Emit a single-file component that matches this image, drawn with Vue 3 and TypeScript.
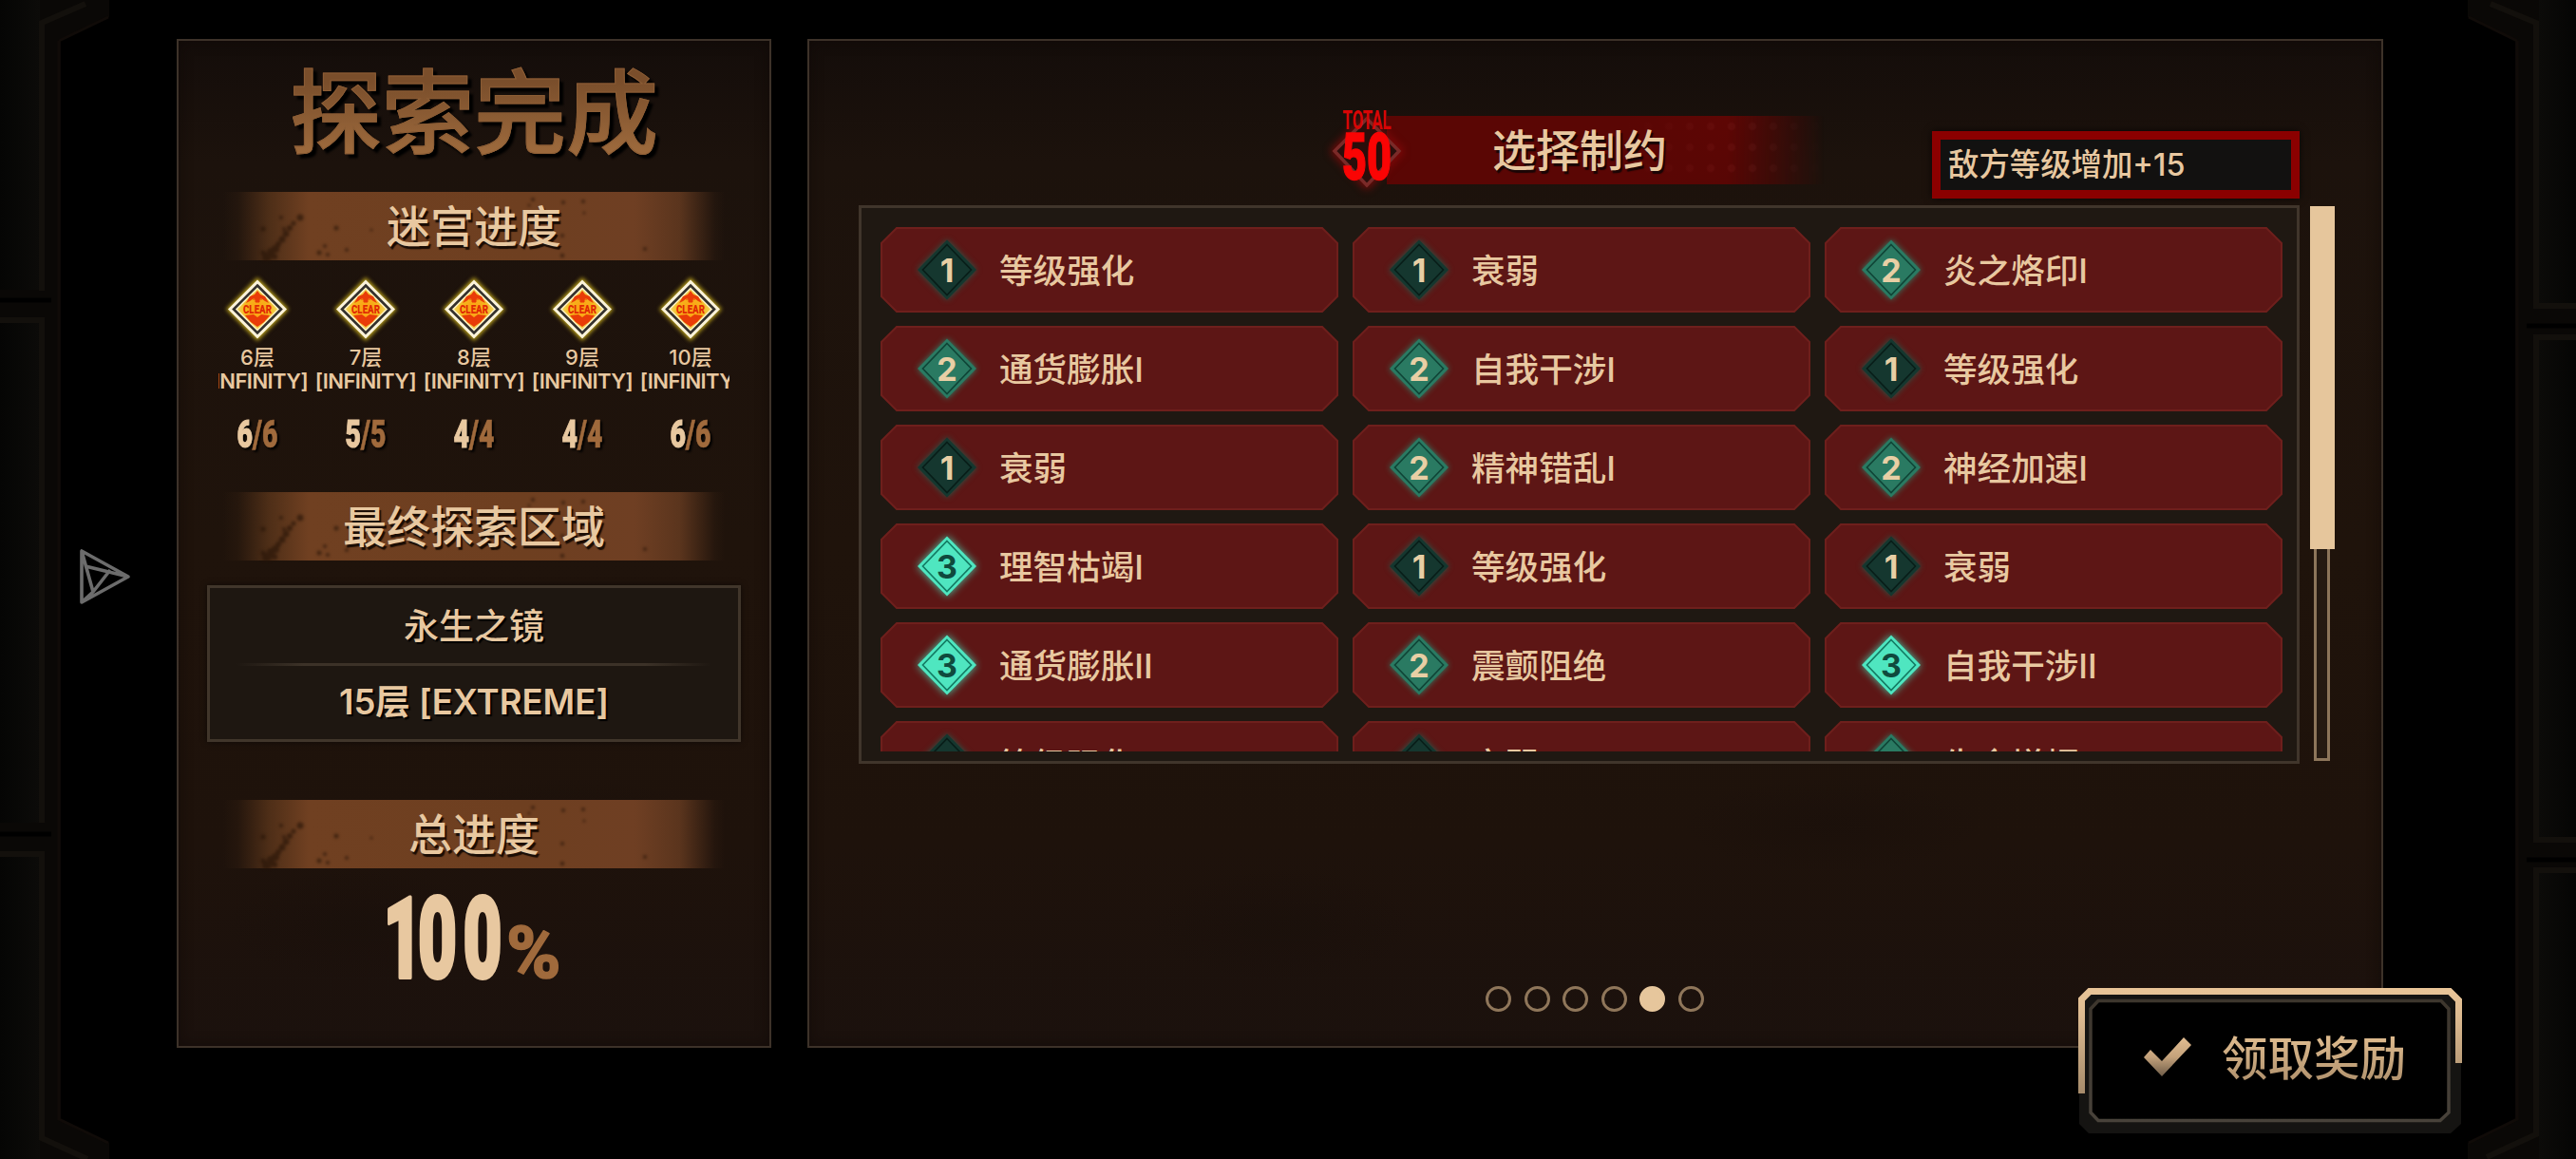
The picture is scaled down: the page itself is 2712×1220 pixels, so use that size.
<script setup lang="ts">
interface Floor {
  floor: string
  done: string
  total: string
}
interface Constraint {
  level: 1 | 2 | 3
  name: string
}

const floors: Floor[] = [
  { floor: '6层', done: '6', total: '/6' },
  { floor: '7层', done: '5', total: '/5' },
  { floor: '8层', done: '4', total: '/4' },
  { floor: '9层', done: '4', total: '/4' },
  { floor: '10层', done: '6', total: '/6' },
]

const constraints: Constraint[] = [
  { level: 1, name: '等级强化' },
  { level: 1, name: '衰弱' },
  { level: 2, name: '炎之烙印I' },
  { level: 2, name: '通货膨胀I' },
  { level: 2, name: '自我干涉I' },
  { level: 1, name: '等级强化' },
  { level: 1, name: '衰弱' },
  { level: 2, name: '精神错乱I' },
  { level: 2, name: '神经加速I' },
  { level: 3, name: '理智枯竭I' },
  { level: 1, name: '等级强化' },
  { level: 1, name: '衰弱' },
  { level: 3, name: '通货膨胀II' },
  { level: 2, name: '震颤阻绝' },
  { level: 3, name: '自我干涉II' },
  { level: 1, name: '等级强化' },
  { level: 1, name: '衰弱' },
  { level: 2, name: '生命增幅' },
]

const pages = 6
const currentPage = 5
const specks: number[][] = [
  [77, 27, 3.5], [70, 33, 2.5], [66, 38, 3], [62, 44, 3.5], [58, 50, 3.5], [54, 55, 3], [51, 60, 4],
  [46, 63, 4], [42, 69, 5], [50, 68, 3], [60, 39, 2], [38, 64, 2.5], [57, 27, 2], [38, 39, 2.5],
  [115, 38, 2.5], [103, 57, 2], [97, 64, 2.5], [106, 66, 2], [126, 61, 2], [152, 40, 1.5],
  [322, 8, 2], [318, 14, 1.5], [354, 11, 2], [375, 10, 2], [376, 22, 1.5], [353, 46, 2], [353, 67, 2.2], [440, 60, 2],
]
</script>

<template>
  <div class="stage">
    <svg class="frame" viewBox="0 0 2712 1220" width="2712" height="1220" aria-hidden="true">
      <defs>
        <linearGradient id="stoneL"><stop offset="0" stop-color="#050504" /><stop offset="1" stop-color="#0c0b09" /></linearGradient>
        <linearGradient id="stoneR"><stop offset="0" stop-color="#0c0b09" /><stop offset="1" stop-color="#050504" /></linearGradient>
      </defs>
      <path d="M0 0H115V18L64 42V1178L115 1203V1220H0Z" fill="#0a0806" />
      <path d="M0 0H42V305H0ZM0 338H42V866H0ZM0 899H42V1220H0Z" fill="url(#stoneL)" />
      <path d="M90 4 44 24V306M0 337H44V866M0 899H44V1198L92 1220" fill="none" stroke="#13100c" stroke-width="6" />
      <path d="M0 316H54M0 878H54" stroke="#000" stroke-width="5" />
      <path d="M62 43V1178L114 1203M62 43 114 18" fill="none" stroke="#100b08" stroke-width="3" />
      <path d="M2712 0H2598V18L2648 42V1178L2598 1203V1220H2712Z" fill="#0a0806" />
      <path d="M2673 0H2712V320H2673ZM2673 355H2712V882H2673ZM2673 916H2712V1220H2673Z" fill="url(#stoneR)" />
      <path d="M2622 4 2670 24V322H2712M2712 355H2670V884H2712M2712 916H2670V1194L2618 1218" fill="none" stroke="#13100c" stroke-width="6" />
      <path d="M2660 343H2712M2660 905H2712" stroke="#000" stroke-width="5" />
      <path d="M2650 43V1178L2599 1203M2650 43 2599 18" fill="none" stroke="#100b08" stroke-width="3" />
    </svg>

    <svg class="cursor" viewBox="0 0 60 68" width="60" height="68">
      <path d="M6 7V61L55 34ZM6 7 18 50M10 23 55 34M36 27 18 50 6 61" fill="none" stroke="#6c6c6c" stroke-width="3.6" stroke-linejoin="round" />
    </svg>

    <main class="panels">
      <section class="panel summary">
        <h1>探索完成</h1>

        <div class="banner first">
          <svg viewBox="0 0 520 73" width="520" height="73"><circle v-for="(s, i) in specks" :key="i" :cx="s[0]" :cy="s[1]" :r="s[2]" /></svg>
          <span>迷宫进度</span>
        </div>

        <div class="floors">
          <div v-for="f in floors" :key="f.floor" class="floor">
            <svg class="clear" viewBox="0 0 76 76" width="76" height="76">
              <defs>
                <radialGradient id="gold"><stop offset="0" stop-color="#ff9b10" /><stop offset=".6" stop-color="#f5b41c" /><stop offset="1" stop-color="#f3d75a" /></radialGradient>
              </defs>
              <path class="glow" d="M38 4 71 37.500 38 71 5 37.500Z" />
              <path d="M38 6.500 69 37.500 38 68.500 7 37.500Z" fill="#fbf3da" />
              <path d="M38 12.500 63 37.500 38 62.500 13 37.500Z" fill="#fff2c4" stroke="#33302c" stroke-width="2.6" />
              <path d="M38 16.500 59 37.500 38 58.500 17 37.500Z" fill="url(#gold)" />
              <path d="M26 31 30 24 35 22 38 18 41 22 46 24 50 31 46 29 42 26 38 28 34 26 30 29ZM25 44 34 43 38 46 42 43 51 44 45 51 38 56 31 51Z" fill="#e93c08" />
              <path d="M36 24H40V30H36ZM33 27H43" fill="#e93c08" stroke="#e93c08" />
              <text x="23" y="41.500" textLength="30" lengthAdjust="spacingAndGlyphs">CLEAR</text>
            </svg>
            <div class="name">{{ f.floor }}</div>
            <div class="mode">[INFINITY]</div>
            <svg class="count" viewBox="0 0 50 44" width="50" height="44">
              <text x="3.5" y="35" textLength="43" lengthAdjust="spacingAndGlyphs">{{ f.done }}<tspan class="of">{{ f.total }}</tspan></text>
            </svg>
          </div>
        </div>

        <div class="banner second">
          <svg viewBox="0 0 520 73" width="520" height="73"><circle v-for="(s, i) in specks" :key="i" :cx="s[0]" :cy="s[1]" :r="s[2]" /></svg>
          <span>最终探索区域</span>
        </div>

        <div class="area">
          <div class="area-name">永生之镜</div>
          <hr />
          <div class="stage-name">15层 [EXTREME]</div>
        </div>

        <div class="banner third">
          <svg viewBox="0 0 520 73" width="520" height="73"><circle v-for="(s, i) in specks" :key="i" :cx="s[0]" :cy="s[1]" :r="s[2]" /></svg>
          <span>总进度</span>
        </div>

        <svg class="percent" viewBox="0 0 190 110" width="190" height="110">
          <g transform="scale(.6 1)">
            <text class="big" x="-1 60 139" y="98">100</text>
            <text class="pct" x="215" y="98" textLength="96" lengthAdjust="spacingAndGlyphs">%</text>
          </g>
        </svg>
      </section>

      <section class="panel detail">
        <header>
          <div class="select">
            <svg class="total" viewBox="0 0 90 100" width="90" height="100">
              <path class="halo" d="M45 18 79 52 45 88 11 52Z" />
              <path class="rhomb" d="M45 18 79 52 45 88 11 52Z" />
              <text class="word" x="19.5" y="29" textLength="51" lengthAdjust="spacingAndGlyphs">TOTAL</text>
              <text class="num" x="19" y="81.500" textLength="52" lengthAdjust="spacingAndGlyphs">50</text>
            </svg>
            <span>选择制约</span>
          </div>
          <div class="effect">敌方等级增加+15</div>
        </header>

        <div class="body">
          <div class="list">
            <div class="grid">
              <div v-for="(c, i) in constraints" :key="i" class="card">
                <svg class="plate" viewBox="0 0 482 90" width="482" height="90">
                  <path d="M17 1H465L481 17V73L465 89H17L1 73V17Z" fill="#5d1615" stroke="#6e1f1c" stroke-width="2" />
                </svg>
                <svg class="badge" :class="'lv' + c.level" viewBox="0 0 76 76" width="76" height="76">
                  <path class="outer" d="M38 6.500 69 38 38 69.500 7 38Z" />
                  <path class="inner" d="M38 11.500 63.500 38 38 64.500 12.500 38Z" />
                  <text x="38" y="50.5" text-anchor="middle">{{ c.level }}</text>
                </svg>
                <span>{{ c.name }}</span>
              </div>
            </div>
          </div>
          <div class="scrollbar"><i></i></div>
        </div>

        <nav class="dots">
          <i v-for="p in pages" :key="p" :class="{ on: p === currentPage }"></i>
        </nav>
      </section>
    </main>

    <button class="claim" type="button">
      <svg class="edge" viewBox="0 0 404 154" width="404" height="154">
        <defs>
          <linearGradient id="rim" x1="0" y1="0" x2="0" y2="1"><stop offset="0" stop-color="#e8c497" /><stop offset=".25" stop-color="#dcba90" /><stop offset="1" stop-color="#a68b6b" /></linearGradient>
          <linearGradient id="inr" x1="0" y1="0" x2="0" y2="1"><stop offset="0" stop-color="#3d362d" /><stop offset="1" stop-color="#48423a" /></linearGradient>
        </defs>
        <path d="M11 1H392L403 12V143L392 153H11L1 143V12Z" fill="#151412" />
        <path d="M21 13.500H382L390 22V131L381 139.500H21L13 131V22Z" fill="#000" stroke="url(#inr)" stroke-width="3.500" />
        <path d="M3.500 111V12L12 3.500H391L400.500 13V79" fill="none" stroke="url(#rim)" stroke-width="7" />
      </svg>
      <svg class="check" viewBox="0 0 54 42" width="54" height="42">
        <defs><linearGradient id="tick" x1="0" y1="0" x2="0" y2="1"><stop offset="0" stop-color="#e2bd91" /><stop offset=".5" stop-color="#c4a27b" /><stop offset="1" stop-color="#6f5d49" /></linearGradient></defs>
        <path d="M1 21 8 13 20 25 43 0 51 8 20 41Z" fill="url(#tick)" />
      </svg>
      <span>领取奖励</span>
    </button>
  </div>
</template>

<style>
body { margin: 0; background: #000; }
</style>

<style scoped>
.stage {
  position: relative;
  width: 2712px;
  height: 1220px;
  overflow: hidden;
  box-sizing: border-box;
  padding: 41px 0 0 186px;
  background: #000;
  color: #e8c8a0;
  font-family: Inter, "Noto Sans CJK SC", sans-serif;
  font-weight: 500;
}
.frame { position: absolute; left: 0; top: 0; }
.cursor { position: absolute; left: 80px; top: 573px; }
.panels { position: relative; display: flex; gap: 38px; }
.panel {
  box-sizing: border-box;
  height: 1062px;
  border: 2px solid #3d3229;
  display: flex;
  flex-direction: column;
  background:
    radial-gradient(ellipse 140px 60px at 30% 88%, #170e0a66, transparent),
    radial-gradient(ellipse 160px 50px at 65% 78%, #170e0a66, transparent),
    linear-gradient(#140d0a 0, #1c120c 12%, #1f130b 50%, #1e120b 80%, #1b110d 100%);
  box-shadow: inset 0 0 14px #0d080588;
}
.summary { width: 626px; align-items: center; }
.detail { width: 1659px; padding: 0 86px 0 52px; }
h1 {
  margin: 20px 0 0;
  font-size: 97px;
  line-height: 112px;
  font-weight: 500;
  background: linear-gradient(#7a4e2b 20%, #9c693c 85%);
  -webkit-background-clip: text;
  background-clip: text;
  color: transparent;
  -webkit-text-stroke: 1px #8c5d35;
  filter: drop-shadow(4px 4px 1px #000);
}
.banner {
  position: relative;
  width: 520px;
  height: 72px;
  flex: none;
  display: flex;
  justify-content: center;
  font-size: 46px;
  line-height: 73px;
  text-shadow: 2px 3px 1px #1a0d05;
}
.banner::before {
  content: "";
  position: absolute;
  inset: 0 -4px;
  background: linear-gradient(90deg, transparent 0, #6d401f18 3%, #6d401f99 9%, #704021 17%, #6e3f20 60%, #6f3f23 82%, #643a20dd 91%, #643a2018 98%, transparent);
}
.banner svg { position: absolute; left: 0; top: 0; fill: #241206; opacity: .6; filter: blur(1.6px); }
.banner span { position: relative; }
.first { margin-top: 27px; }
.floors { width: 538px; flex: none; display: flex; justify-content: center; overflow: hidden; margin-top: 14px; }
.floor { width: 114px; flex: none; display: flex; flex-direction: column; align-items: center; white-space: nowrap; line-height: 25px; }
.clear .glow { fill: #b8a01c; filter: blur(2px); }
.clear text { font: 900 13px Roboto, sans-serif; fill: #e02a04; stroke: #ffb81a; stroke-width: .5; paint-order: stroke; }
.name { margin-top: 0; font-size: 22px; }
.mode { font-size: 22px; letter-spacing: -.55px; font-weight: 600; }
.count { margin-top: 22px; filter: drop-shadow(2px 2px 1px #000); }
.count text { font: 900 41px Roboto, sans-serif; fill: #e8c8a0; stroke: #e8c8a0; stroke-width: 1; }
.count .of { fill: #a06a3c; stroke: #a06a3c; stroke-width: .6; }
.second { margin-top: 38px; }
.area {
  box-sizing: border-box;
  width: 562px;
  height: 165px;
  flex: none;
  margin-top: 26px;
  border: 3px solid #41362b;
  background: #1e1711;
  box-shadow: 0 0 6px #0008;
  text-align: center;
  font-size: 37px;
  text-shadow: 2px 2px 1px #000;
}
.area .area-name { line-height: 82px; height: 79px; }
.area hr { width: 500px; height: 3px; margin: 0 auto; border: 0; background: linear-gradient(90deg, transparent, #3c3228 14%, #3c3228 86%, transparent); }
.area .stage-name { font-weight: 600; font-size: 36.500px; line-height: 76px; }
.third { margin-top: 61px; }
.percent { margin-top: 17px; flex: none; }
.percent text { font: 900 118px Roboto, sans-serif; fill: #e8c8a0; stroke: #e8c8a0; stroke-width: 4; stroke-linejoin: round; }
.percent .pct { font-size: 76px; font-weight: 800; fill: #a06a3c; stroke: #a06a3c; stroke-width: 1.5; }

header { display: flex; justify-content: space-between; align-items: flex-start; height: 173px; box-sizing: border-box; padding: 79px 0 0 556px; }
.select { position: relative; width: 460px; height: 72px; }
.select::before {
  content: "";
  position: absolute;
  inset: 0;
  background:
    linear-gradient(90deg, #5a0604 55%, transparent 85%),
    radial-gradient(circle, #7a1a1a66 3px, transparent 5px) 0 0 / 22px 22px,
    linear-gradient(#5f0604, #570604);
  -webkit-mask-image: linear-gradient(90deg, #000 0, #000 78%, #0007 90%, transparent 100%);
}
.select span { position: relative; display: block; padding-left: 111px; font-size: 46px; line-height: 73px; text-shadow: 2px 3px 1px #1a0505; }
.total { position: absolute; left: -66px; top: -15px; overflow: visible; }
.total .halo { fill: #3a0806; stroke: #a0080a; stroke-width: 5; filter: blur(5px); }
.total .rhomb { fill: #2a0e0b; stroke: #7a2a28; stroke-width: 3.5; }
.total text { fill: #fa0404; font-family: Roboto, sans-serif; }
.total .word { font-size: 27px; font-weight: 700; fill: #d80505; }
.total .num { font-size: 69px; font-weight: 900; stroke: #fa0404; stroke-width: 1.5; }
.effect {
  box-sizing: border-box;
  width: 387px;
  height: 71px;
  margin-top: 16px;
  border: 9px solid #8b0000;
  background: #121110;
  box-shadow: 0 0 8px #000a;
  padding-left: 8px;
  font-size: 32.400px;
  line-height: 53px;
  white-space: nowrap;
}
.body { display: flex; gap: 11px; margin-right: -40px; }
.list {
  box-sizing: border-box;
  width: 1517px;
  flex: none;
  height: 588px;
  border: 3px solid #40352b;
  background: #1f1812;
  padding: 20px 0 0 20px;
}
.grid { display: grid; grid-template-columns: repeat(3, 482px); grid-auto-rows: 90px; gap: 14px 15px; height: 552px; overflow: hidden; }
.card { position: relative; display: flex; align-items: center; font-size: 35.600px; white-space: nowrap; padding-left: 32px; }
.card .plate { position: absolute; left: 0; top: 0; }
.card .badge, .card span { position: relative; }
.card span { padding-bottom: 4px; }
.card .badge { margin-right: 17px; flex: none; }
.badge text { font: 700 34px Inter, sans-serif; fill: #e8cfa5; }
.badge .inner { fill: none; stroke-width: 1.6; }
.lv1 .outer { fill: #15372f; filter: drop-shadow(0 0 3px #245a4c); }
.lv1 .inner { stroke: #081d18; }
.lv2 .outer { fill: #2a7a62; filter: drop-shadow(0 0 3px #2f8068); }
.lv2 .inner { stroke: #0f4436; }
.lv3 .outer { fill: #4fe6c0; filter: drop-shadow(0 0 4px #43c9a8); }
.lv3 .inner { stroke: #137a62; }
.lv3 text { fill: #0f4a3d; }
.scrollbar { position: relative; width: 26px; height: 587px; }
.scrollbar::before { content: ""; position: absolute; left: 4px; top: 2px; bottom: 2px; width: 17px; box-sizing: border-box; border: 3px solid #8c755a; background: #251a12; }
.scrollbar i { position: absolute; left: 0; top: 1px; width: 26px; height: 361px; background: #e6c69c; }
.dots { display: flex; gap: 13.600px; margin: 234px 0 0 660px; }
.dots i { box-sizing: border-box; width: 27px; height: 27px; border: 3px solid #8f765a; border-radius: 50%; }
.dots .on { background: #e6c69c; border-color: #e6c69c; }
.claim {
  position: absolute;
  left: 2188px;
  top: 1040px;
  width: 404px;
  height: 154px;
  padding: 0 0 0 68px;
  border: 0;
  background: none;
  display: flex;
  align-items: center;
  font: 500 48.500px/60px Inter, "Noto Sans CJK SC", sans-serif;
  color: #c9a980;
}
.claim .edge { position: absolute; left: 0; top: 0; }
.claim .check { position: relative; margin-right: 29px; margin-top: -8px; }
.claim span { position: relative; margin-top: -4px; white-space: nowrap; background: linear-gradient(#dcb98d 15%, #b3946f 85%); -webkit-background-clip: text; background-clip: text; color: transparent; }
</style>
